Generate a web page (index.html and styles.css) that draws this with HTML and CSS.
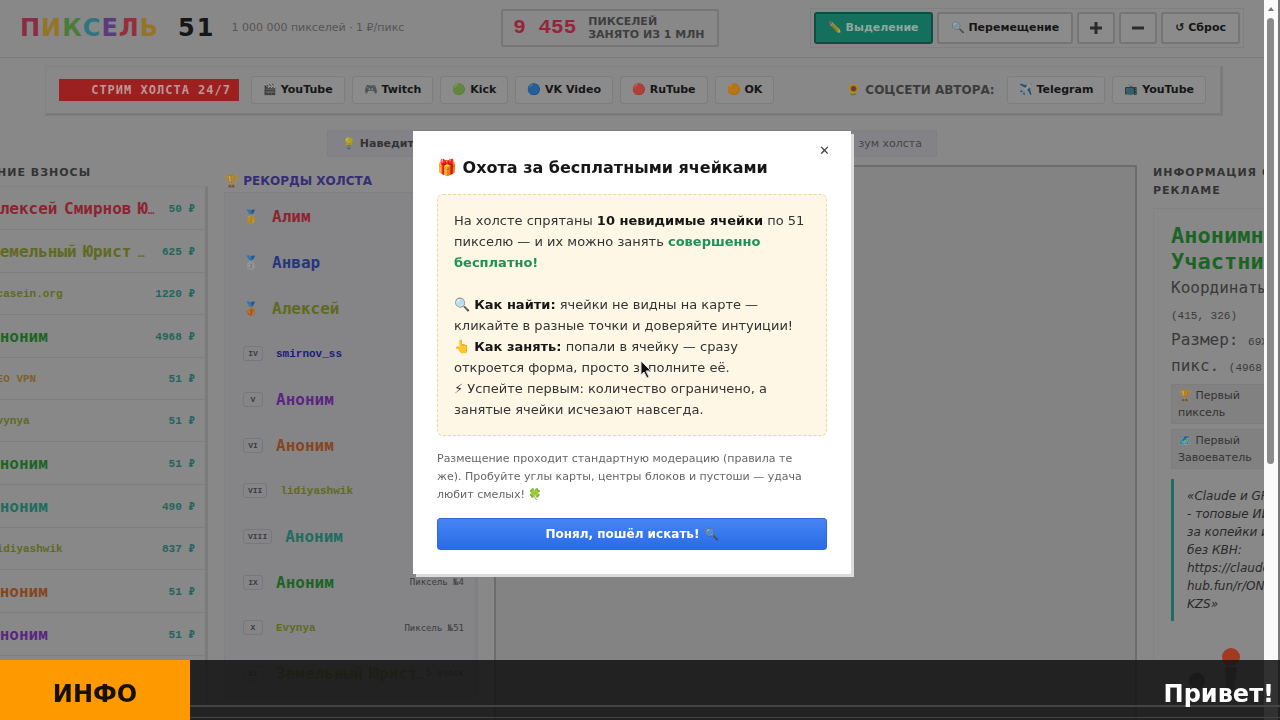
FILE: index.html
```
<!DOCTYPE html>
<html lang="ru">

<head>
    <meta charset="UTF-8">
    <meta name="viewport" content="width=device-width, initial-scale=1.0">
    <title>Пиксель 51</title>
    <link rel="stylesheet" href="styles.css">
</head>

<body>
    <div class="page">
        <header class="header">
            <div class="brand">
                <h1 class="logo"><span class="c1">П</span><span class="c2">И</span><span class="c3">К</span><span class="c4">С</span><span class="c5">Е</span><span class="c6">Л</span><span class="c2">Ь</span></h1>
                <span class="logo-num">51</span>
                <span class="tagline">1 000 000 пикселей · 1 ₽/пикс</span>
            </div>
            <div class="counter">
                <span class="counter-value">9 455</span>
                <span class="counter-label">ПИКСЕЛЕЙ<br>ЗАНЯТО ИЗ 1 МЛН</span>
            </div>
            <div class="tools">
                <button class="tool active"><span class="emoji">✏️</span> Выделение</button>
                <button class="tool"><span class="emoji">🔍</span> Перемещение</button>
                <button class="tool zoom" aria-label="Приблизить"><svg viewBox="0 0 12 12"><path d="M6 0v12M0 6h12" /></svg></button>
                <button class="tool zoom" aria-label="Отдалить"><svg viewBox="0 0 12 12"><path d="M0 6h12" /></svg></button>
                <button class="tool">↺ Сброс</button>
            </div>
        </header>

        <nav class="streams">
            <span class="live">СТРИМ ХОЛСТА 24/7</span>
            <a href="#" class="link"><span class="emoji">🎬</span> YouTube</a>
            <a href="#" class="link"><span class="emoji">🎮</span> Twitch</a>
            <a href="#" class="link"><span class="emoji">🟢</span> Kick</a>
            <a href="#" class="link"><span class="emoji">🔵</span> VK Video</a>
            <a href="#" class="link"><span class="emoji">🔴</span> RuTube</a>
            <a href="#" class="link"><span class="emoji">🟠</span> OK</a>
            <span class="author"><span class="emoji">🌻</span> СОЦСЕТИ АВТОРА:</span>
            <a href="#" class="link"><span class="emoji">✈️</span> Telegram</a>
            <a href="#" class="link"><span class="emoji">📺</span> YouTube</a>
        </nav>

        <div class="hint"><b><span class="emoji">💡</span> Наведите</b><span>зум холста</span></div>

        <main class="columns">
            <section>
                <h2 class="title">ПОСЛЕДНИЕ ВЗНОСЫ</h2>
                <ul class="panel donations">
                    <li class="red"><b>Алексей<i> </i>Смирнов<i> </i>Ю<i>…</i></b><em>50 ₽</em></li>
                    <li class="olive"><b>Земельный<i> </i>Юрист<i> …</i></b><em>625 ₽</em></li>
                    <li class="olive latin"><b>1casein.org</b><em>1220 ₽</em></li>
                    <li class="green"><b>Аноним</b><em>4968 ₽</em></li>
                    <li class="amber latin"><b>GEO VPN</b><em>51 ₽</em></li>
                    <li class="olive latin"><b>Evynya</b><em>51 ₽</em></li>
                    <li class="green"><b>Аноним</b><em>51 ₽</em></li>
                    <li class="teal"><b>Аноним</b><em>490 ₽</em></li>
                    <li class="olive latin"><b>lidiyashwik</b><em>837 ₽</em></li>
                    <li class="orange"><b>Аноним</b><em>51 ₽</em></li>
                    <li class="purple"><b>Аноним</b><em>51 ₽</em></li>
                </ul>
            </section>

            <section>
                <h2 class="title records-title"><span class="emoji">🏆</span> РЕКОРДЫ ХОЛСТА</h2>
                <ol class="panel records">
                    <li class="red"><span class="medal emoji">🥇</span><b>Алим</b><small>Пиксель №</small></li>
                    <li class="blue"><span class="medal emoji">🥈</span><b>Анвар</b><small>Пиксель №</small></li>
                    <li class="olive"><span class="medal emoji">🥉</span><b>Алексей</b><small>Пиксель №</small></li>
                    <li class="navy latin"><span class="rank">IV</span><b>smirnov_ss</b><small>Пиксель №</small></li>
                    <li class="purple"><span class="rank">V</span><b>Аноним</b><small>Пиксель №</small></li>
                    <li class="orange"><span class="rank">VI</span><b>Аноним</b><small>Пиксель №</small></li>
                    <li class="olive latin"><span class="rank">VII</span><b>lidiyashwik</b><small>Пиксель №</small></li>
                    <li class="teal"><span class="rank">VIII</span><b>Аноним</b><small>Пиксель №</small></li>
                    <li class="green"><span class="rank">IX</span><b>Аноним</b><small>Пиксель №4</small></li>
                    <li class="olive latin"><span class="rank">X</span><b>Evynya</b><small>Пиксель №51</small></li>
                    <li class="olive"><span class="rank">XI</span><b>Земельный<i> </i>Юрист<i>…</i></b><small>5 ячеек</small></li>
                </ol>
            </section>

            <div class="canvas"></div>

            <section>
                <h2 class="title">ИНФОРМАЦИЯ О<br>РЕКЛАМЕ</h2>
                <div class="panel info">
                    <h3>Анонимный<br>Участник</h3>
                    <p>Координаты:<br><i>(415, 326)</i><br>Размер: <i>69X72</i><br>пикс. <i>(4968 ₽)</i></p>
                    <div class="award"><span class="emoji">🏆</span> Первый<br>пиксель</div>
                    <div class="award"><span class="emoji">🗺️</span> Первый<br>Завоеватель</div>
                    <blockquote>«Claude и GPT<br>- топовые ИИ<br>за копейки и<br>без КВН:<br>https://claude-<br>hub.fun/r/ON<br>KZS»</blockquote>
                    <svg class="picture" viewBox="0 0 120 100">
                        <circle cx="60" cy="10" r="9" fill="#a03a20" />
                        <path d="M54 20h12l-4 30h-6z" fill="#555" />
                        <circle cx="26" cy="34" r="8" fill="#444" />
                    </svg>
                </div>
            </section>
        </main>
    </div>

    <div class="scrollbar">
        <svg viewBox="0 0 9 18"><path d="M1 11l3-4 3 4z" fill="#777" /></svg>
        <div class="thumb"></div>
    </div>

    <div class="overlay">
        <div class="modal" role="dialog" aria-labelledby="modal-title">
            <button class="close" aria-label="Закрыть">✕</button>
            <h2 id="modal-title">🎁 Охота за бесплатными ячейками</h2>
            <div class="rules">
                На холсте спрятаны <b>10 невидимые ячейки</b> по 51 пикселю — и их можно занять <b class="free">совершенно бесплатно!</b><br><br>
                🔍 <b>Как найти:</b> ячейки не видны на карте — кликайте в разные точки и доверяйте интуиции!<br>
                👆 <b>Как занять:</b> попали в ячейку — сразу откроется форма, просто заполните её.<br>
                ⚡︎ Успейте первым: количество ограничено, а занятые ячейки исчезают навсегда.
            </div>
            <p class="note">Размещение проходит стандартную модерацию (правила те же). Пробуйте углы карты, центры блоков и пустоши — удача любит смелых! 🍀</p>
            <button class="ok">Понял, пошёл искать! <span class="emoji">🔍</span></button>
        </div>
    </div>

    <footer class="ticker">
        <div class="ticker-label">ИНФО</div>
        <div class="ticker-text">Привет!</div>
    </footer>

    <svg class="cursor" viewBox="0 0 12 19">
        <path d="M1 1v14l3-3 3 6 2-1-3-6h5z" fill="#111" stroke="#ddd" stroke-width="1" />
    </svg>
</body>

</html>
```
FILE: styles.css
```
* {
    box-sizing: border-box;
}

body {
    margin: 0;
    height: 100vh;
    overflow: hidden;
    background: #888;
    color: #161616;
    font-family: "DejaVu Sans", sans-serif;
    font-size: 12px;
}

h1,
h2,
h3,
p,
ul,
ol,
blockquote {
    margin: 0;
    padding: 0;
    list-style: none;
}

button {
    font-family: inherit;
    cursor: pointer;
}

.page {
    height: 100vh;
    margin-right: 16px;
    overflow: hidden;
}

.emoji {
    opacity: 0.85;
    filter: brightness(0.75);
}

/* header */
.header {
    display: flex;
    justify-content: space-between;
    align-items: center;
    height: 58px;
    padding: 0 20px 2px;
    border-bottom: 1px solid #7c7c7c;
}

.brand {
    display: flex;
    align-items: center;
    width: 436px;
}

.logo,
.logo-num {
    font-size: 24px;
    font-weight: bold;
    line-height: 28px;
}

.logo {
    width: 144px;
    letter-spacing: 1px;
}

.logo-num {
    margin-left: 14px;
    letter-spacing: 2px;
}

.c1 { color: #8a2c44; }
.c2 { color: #967426; }
.c3 { color: #4c7c3a; }
.c4 { color: #2e7580; }
.c5 { color: #5a3c7c; }
.c6 { color: #94303c; }

.tagline {
    margin-left: 16px;
    color: #555;
    font-size: 11px;
    white-space: nowrap;
}

.counter {
    display: flex;
    align-items: center;
    gap: 12px;
    height: 38px;
    margin-right: 46px;
    padding: 0 12px 0 10px;
    border: 2px solid #767676;
    border-radius: 2px;
    white-space: nowrap;
}

.counter-value {
    color: #98243c;
    font: bold 21px "Liberation Mono", monospace;
}

.counter-label {
    color: #3e3e3e;
    font-size: 11px;
    font-weight: bold;
    line-height: 13px;
}

.tools {
    display: flex;
    justify-content: flex-end;
    gap: 4px;
    padding: 3px;
    border: 1px solid #808080;
}

.tool {
    height: 32px;
    padding: 0 12px;
    border: 2px solid #757575;
    border-radius: 3px;
    background: #8b8b8b;
    color: #161616;
    font-size: 11px;
    font-weight: bold;
    white-space: nowrap;
}

.tool.active {
    border-color: #124c40;
    background: #14705c;
    color: #8fa89f;
}

.tool.zoom {
    width: 38px;
    padding: 0;
}

.tool svg {
    display: block;
    width: 12px;
    height: 12px;
    margin: 0 auto;
    stroke: #2c2c2c;
    stroke-width: 3;
}

/* stream links */
.streams {
    display: flex;
    align-items: center;
    gap: 7px;
    height: 50px;
    margin: 8px 41px 0 45px;
    padding: 0 14px 0 13px;
    border: 1px solid #828282;
    border-right: 3px solid #7b7b7b;
    border-bottom: 3px solid #7b7b7b;
}

.live {
    width: 180px;
    margin-right: 5px;
    padding-right: 8px;
    background: #9c2020;
    color: #bf9696;
    font: bold 12px/22px "DejaVu Sans Mono", monospace;
    letter-spacing: 1px;
    text-align: right;
    white-space: nowrap;
}

.link {
    padding: 1px 11px;
    border: 1px solid #7d7d7d;
    border-radius: 3px;
    background: #8b8b8b;
    color: #161616;
    font-size: 11px;
    font-weight: bold;
    line-height: 24px;
    text-decoration: none;
    white-space: nowrap;
}

.author {
    margin-left: auto;
    margin-right: 5px;
    color: #3c3c3c;
    font-size: 12px;
    font-weight: bold;
    white-space: nowrap;
}

.hint {
    display: flex;
    justify-content: space-between;
    width: 610px;
    margin: 14px auto 0;
    padding: 0 14px;
    border: 1px solid #808084;
    background: #838387;
    color: #454545;
    font-size: 11px;
    line-height: 25px;
}

.hint b {
    color: #333;
}

/* columns */
.columns {
    display: grid;
    grid-template-columns: 270px 254px 1fr 147px;
    gap: 16px;
    margin: 7px -36px 0 -62px;
}

.columns i {
    font: 11px "Liberation Mono", monospace;
}

.columns b i {
    font-weight: bold;
}

.title {
    color: #333;
    font-size: 11px;
    line-height: 18px;
    letter-spacing: 1px;
    white-space: nowrap;
}

.records-title {
    padding-top: 8px;
    color: #352e75;
    font-size: 12px;
    letter-spacing: 0;
}

.panel {
    border: 1px solid #828282;
    border-right: 3px solid #7b7b7b;
}

.donations {
    min-height: 520px;
    margin-top: 4px;
}

.donations li,
.records li {
    display: flex;
    align-items: center;
    height: 43px;
    padding: 0 10px 0 51px;
    border-bottom: 1px solid #7f7f7f;
    font: bold 16px "DejaVu Sans Mono", monospace;
    white-space: nowrap;
}

.donations .latin {
    height: 42px;
}

.latin b,
.donations em {
    font: bold 11px "Liberation Mono", monospace;
}

.donations em {
    margin-left: auto;
    color: #1f665a;
}

.red { color: #8c2430; }
.olive { color: #5f6a1e; }
.green { color: #1c6424; }
.amber { color: #80602a; }
.teal { color: #1f6c60; }
.orange { color: #86451f; }
.purple { color: #5a2680; }
.blue { color: #26357f; }
.navy { color: #1d1a7a; }

.records {
    margin-top: 2px;
    background: #858587;
    border-color: #7f7f84;
}

.records li {
    height: 46px;
    padding: 0 11px 0 18px;
    border: 0;
}

.records .latin {
    height: 45px;
}

.medal {
    width: 29px;
    font-size: 13px;
}

.rank {
    min-width: 20px;
    margin-right: 13px;
    padding: 0 4px;
    border: 1px solid #77777c;
    border-radius: 3px;
    color: #3c3c42;
    font: bold 8px/13px "Liberation Mono", monospace;
    text-align: center;
}

.records small {
    margin-left: auto;
    color: #3c3c3c;
    font-size: 9px;
    font-weight: normal;
}

.canvas {
    margin-top: 1px;
    border: 2px solid #6c6c6c;
    background: #838383;
}

.info {
    margin-top: 8px;
    padding: 14px 0 0 17px;
    white-space: nowrap;
}

.info h3 {
    color: #1c6424;
    font: bold 22px/26px "DejaVu Sans Mono", monospace;
}

.info p {
    color: #3a3a3a;
    font: 16px/26px "DejaVu Sans Mono", monospace;
}

.award {
    margin: 5px 0;
    padding: 2px 6px;
    border: 1px solid #7d7d7d;
    background: #818181;
    color: #333;
    font-size: 11px;
    line-height: 17px;
}

.info blockquote {
    margin-top: 10px;
    padding: 8px 0 8px 13px;
    border-left: 3px solid #1f6c60;
    color: #2a2a2a;
    font-size: 12px;
    font-style: italic;
    line-height: 18px;
}

.picture {
    display: block;
    width: 120px;
    margin-top: 26px;
}

/* window scrollbar */
.scrollbar {
    position: fixed;
    top: 0;
    right: 0;
    bottom: 0;
    width: 16px;
    padding: 0 4px 0 3px;
    border-right: 2px solid #777;
    background: #fafafa;
}

.scrollbar svg {
    display: block;
    height: 18px;
}

.thumb {
    height: 62vh;
    border-radius: 4px;
    background: #8a8a8a;
}

/* modal */
.overlay {
    display: flex;
    align-items: center;
    justify-content: center;
    position: fixed;
    inset: 0 16px 16px 0;
}

.modal {
    position: relative;
    width: 438px;
    padding: 24px;
    background: #fff;
    box-shadow: 3px 3px 0 #dadcde;
}

.modal h2 {
    font-size: 16px;
    line-height: 26px;
}

.close {
    position: absolute;
    top: 10px;
    right: 16px;
    padding: 2px 5px;
    border: 0;
    background: none;
    color: #444;
    font-size: 13px;
}

.rules {
    margin-top: 13px;
    padding: 15px 16px;
    border: 1px dashed #ecd9a0;
    border-radius: 6px;
    background: #fef7e6;
    color: #333;
    font-size: 13px;
    line-height: 21px;
}

.rules b {
    color: #161616;
}

.rules .free {
    color: #20905a;
}

.note {
    margin: 14px 0;
    padding-right: 10px;
    color: #666;
    font-size: 11px;
    line-height: 18px;
}

.ok {
    width: 100%;
    height: 32px;
    border: 1px solid #2f68d8;
    border-radius: 3px;
    background: linear-gradient(#4585f5, #2a6be6);
    color: #fff;
    font-size: 12px;
    font-weight: bold;
}

/* news ticker */
.ticker {
    display: flex;
    position: fixed;
    left: 0;
    right: 0;
    bottom: 0;
    height: 60px;
    background: rgba(20, 20, 20, 0.88);
    font-size: 24px;
    font-weight: bold;
    line-height: 68px;
}

.ticker-label {
    width: 190px;
    background: #ff9900;
    color: #161000;
    text-align: center;
}

.ticker-text {
    flex: 1;
    padding-right: 6px;
    background: linear-gradient(transparent 45px, #444 45px, #444 47px, transparent 47px, transparent 57px, #444 57px, #444 58px, transparent 58px);
    color: #fff;
    text-align: right;
}

.cursor {
    position: fixed;
    top: 50%;
    left: 50%;
    width: 12px;
    height: 19px;
}
```
